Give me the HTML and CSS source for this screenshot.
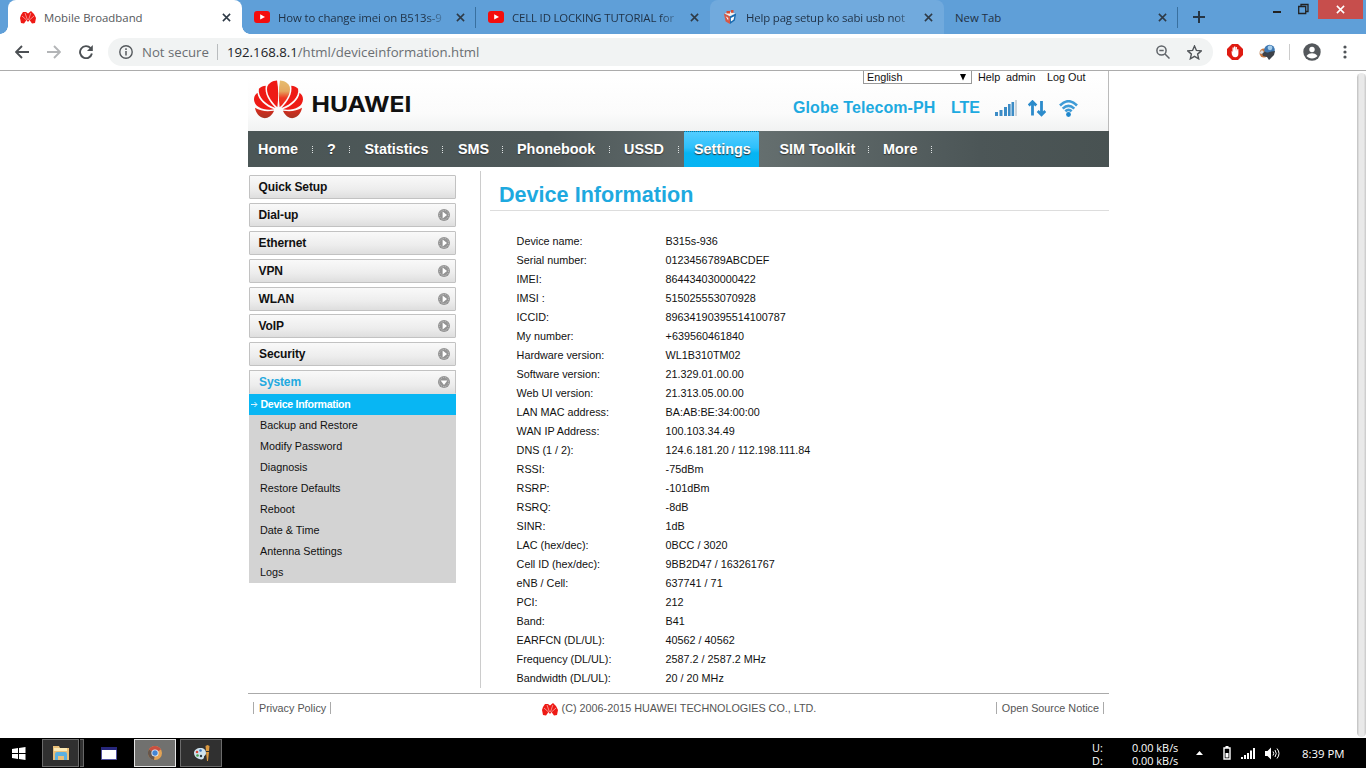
FILE: index.html
```html
<!DOCTYPE html>
<html lang="en">
<head>
<meta charset="utf-8">
<title>Mobile Broadband</title>
<link rel="stylesheet" href="styles.css">
</head>
<body>
<svg width="0" height="0" class="defs">
  <defs>
    <symbol id="x" viewBox="0 0 10 10"><path d="M1 1L9 9M9 1L1 9" stroke="currentColor" stroke-width="1.700" fill="none"/></symbol>
    <symbol id="yt" viewBox="0 0 16 12"><rect width="16" height="12" rx="3" fill="#f40d0d"/><path d="M6.200 3.200v5.400L11 5.900z" fill="#fff"/></symbol>
    <symbol id="flower" viewBox="0 0 50 39">
      <path d="M23.800 27.500C17 21 12 13 13.500 6.500C15 2.500 19 .3 23.500 0C25 8 25 18 23.800 27.500z"/>
      <path class="tip" d="M26.200 27.500C33 21 38 13 36.500 6.500C35 2.500 31 .3 26.500 0C25 8 25 18 26.200 27.500z"/>
      <path d="M22 28.200C12 24.500 3.500 17 5 8.500C7 6.500 9.500 5.600 12 5.500C10.500 14 15.500 21.500 22 28.200z"/>
      <path d="M28 28.200C38 24.500 46.500 17 45 8.500C43 6.500 40.500 5.600 38 5.500C39.500 14 34.500 21.500 28 28.200z"/>
      <path d="M20.500 29.500C10 31 .5 27.500 0 19.500C0 16.500 1 14.500 3.500 12.500C4.500 20 11.500 26 20.500 29.500z"/>
      <path d="M29.500 29.500C40 31 49.500 27.500 50 19.500C50 16.500 49 14.500 46.500 12.500C45.500 20 38.500 26 29.500 29.500z"/>
      <path class="low" d="M20.500 31C18.500 36 14 39 10 38.500C5 37.500 2 33.500 1 28C6.500 31.500 13 32 20.500 31z"/>
      <path class="low" d="M29.500 31C31.500 36 36 39 40 38.500C45 37.500 48 33.500 49 28C43.500 31.500 37 32 29.500 31z"/>
    </symbol>
    <symbol id="mini" viewBox="0 0 16 14">
      <path d="M3 2h3l2 1.500L11 1l3 3 2 4-1 5-3 .5L9.500 10 8 12l-1.500-2L4 13.500 1 13 0 8l1-3z"/>
      <path d="M5 3l2.500 7M10.800 3L8.500 10M2 6l4.500 4M14 6l-4.500 4" stroke="#fff" stroke-width=".5"/>
    </symbol>
    <symbol id="go" viewBox="0 0 12 12"><circle cx="6" cy="6" r="6" fill="#939393"/><circle cx="6" cy="6" r="4.600" fill="none" stroke="#c9c9c9" stroke-width="1" stroke-dasharray="1 1.200"/><path d="M4.600 2.600v6.800L9 6z" fill="#fff"/></symbol>
  </defs>
</svg>

<header class="tabs">
  <div class="tab active"><svg class="fav"><use href="#mini"/></svg><span class="tt">Mobile Broadband</span><svg class="close"><use href="#x"/></svg></div>
  <div class="tab sep"><svg class="fav yt"><use href="#yt"/></svg><span class="tt fade t2">How to change imei on B513s-9</span><svg class="close"><use href="#x"/></svg></div>
  <div class="tab"><svg class="fav yt"><use href="#yt"/></svg><span class="tt fade t3">CELL ID LOCKING TUTORIAL for</span><svg class="close"><use href="#x"/></svg></div>
  <div class="tab hover"><svg class="fav" viewBox="0 0 16 16"><path d="M1 4l7 3v9l-5-3z" fill="#d65846"/><path d="M8 7l7-3-1.500 8L8 16z" fill="#1769ae"/><path d="M2 4l6-2 6 2-6 3z" fill="#f3f0ed"/><path d="M4 1h4v3H4zM9 0h3v3H9z" fill="#db4d32"/><path d="M9 9l4-2-1 4-3 2zM3 7l3 2v3z" fill="#fff"/></svg><span class="tt fade t4">Help pag setup ko sabi usb not</span><svg class="close"><use href="#x"/></svg></div>
  <div class="tab last sep"><span class="tt">New Tab</span><svg class="close"><use href="#x"/></svg></div>
  <svg class="plus" viewBox="0 0 12 12"><path d="M6 0v12M0 6h12" stroke="#263544" stroke-width="2"/></svg>
  <div class="win">
    <svg width="8" height="20"><path d="M0 12h8" stroke="#222" stroke-width="2"/></svg>
    <svg width="11" height="20"><path d="M3 6V4.500h7v7H8M.7 6.500h7v7h-7z" fill="none" stroke="#222" stroke-width="1.300"/></svg>
    <div class="wclose"><svg width="9" height="9"><use href="#x"/></svg></div>
  </div>
</header>

<div class="toolbar">
  <svg class="back" viewBox="0 0 14 14"><path d="M14 7H1M7 1L1 7l6 6" fill="none" stroke="#4c5054" stroke-width="1.900"/></svg>
  <svg class="fwd" viewBox="0 0 14 14"><path d="M0 7h13M7 1l6 6-6 6" fill="none" stroke="#b3b5b7" stroke-width="1.900"/></svg>
  <svg class="reload" viewBox="0 0 14 14"><path d="M11.600 3.200A6 6 0 1 0 12.900 8.500" fill="none" stroke="#4c5054" stroke-width="1.900"/><path d="M13.800 0v6H8z" fill="#4c5054"/></svg>
  <div class="omni">
    <svg class="info" viewBox="0 0 14 14"><circle cx="7" cy="7" r="6.200" fill="none" stroke="#55595d" stroke-width="1.400"/><path d="M7 6v4.500M7 3.300v1.600" stroke="#55595d" stroke-width="1.500"/></svg>
    <span class="ns">Not secure</span><i></i>
    <span class="url"><b>192.168.8.1</b>/html/deviceinformation.html</span>
    <svg class="mag" viewBox="0 0 14 14"><circle cx="5.500" cy="5.500" r="4.600" fill="none" stroke="#5f6368" stroke-width="1.500"/><path d="M9 9l4.500 4.500M3.300 5.500h4.400" stroke="#5f6368" stroke-width="1.500"/></svg>
    <svg class="star" viewBox="0 0 14 14"><path d="M7 .9l1.800 4.200 4.500.4-3.400 3 1 4.400L7 10.600l-3.900 2.300 1-4.400-3.400-3 4.500-.4z" fill="none" stroke="#505458" stroke-width="1.300"/></svg>
  </div>
  <svg class="e1" viewBox="0 0 16 16"><path d="M5 0h6l5 5v6l-5 5H5l-5-5V5z" fill="#df1b12"/><path d="M4.500 7l1 .8V3.600h1.200V7l.3-4.500h1.300V7l.4-4h1.200v4.200l.5-2.200 1 .2v4.300c0 2.500-1 3.700-3.200 3.700-2 0-2.700-1.200-3.400-3z" fill="#fff"/></svg>
  <svg class="e2" viewBox="0 0 16 16"><circle cx="5" cy="9" r="4.500" fill="#c9783f"/><circle cx="10.500" cy="6" r="5.300" fill="#3f79b3"/><circle cx="11" cy="3.800" r="2.400" fill="#a6cdea"/><path d="M3 9c3-3 5 1 7-1l6-1-1 4-5 5-2-3-4-1z" fill="#3d4249"/><path d="M0 9l3-3 2 2-2 2z" fill="#d9dde0"/></svg>
  <i class="tdiv"></i>
  <svg class="user" viewBox="0 0 18 18"><circle cx="9" cy="9" r="8.700" fill="#54585c"/><circle cx="9" cy="6.500" r="2.700" fill="#fff"/><path d="M3.500 13c1.500-2.200 3.500-2.800 5.500-2.800s4 .6 5.500 2.800c-1.400 1.700-3.300 2.400-5.500 2.400S4.900 14.700 3.500 13z" fill="#fff"/></svg>
  <svg class="dots" viewBox="0 0 4 14"><g fill="#505458"><circle cx="2" cy="2" r="1.600"/><circle cx="2" cy="7" r="1.600"/><circle cx="2" cy="12" r="1.600"/></g></svg>
</div>

<main class="view">
  <div class="page">
    <div class="head">
      <svg class="logo" viewBox="0 0 160 42"><defs><linearGradient id="pg" x1="0" y1="0" x2="0" y2="1"><stop offset="0" stop-color="#e6bd70"/><stop offset=".4" stop-color="#e5a860"/><stop offset=".65" stop-color="#ee3a22"/><stop offset="1" stop-color="#f02018"/></linearGradient><linearGradient id="lg" x1="0" y1="0" x2="0" y2="1"><stop offset="0" stop-color="#e02a1c"/><stop offset="1" stop-color="#a83524"/></linearGradient></defs><use href="#flower" width="49" height="39" x="0" y="0"/><text x="57.500" y="31.500" textLength="100" lengthAdjust="spacingAndGlyphs">HUAWEI</text></svg>
      <div class="hr">
        <div class="top"><div class="sel"><span>English</span><svg width="6" height="7"><path d="M0 0h6L3 6.500z"/></svg></div><span class="help">Help</span><span class="adm">admin</span><span class="out">Log Out</span></div>
        <div class="net"><span class="op">Globe Telecom-PH</span><span class="lte">LTE</span>
          <svg class="sig" viewBox="0 0 22 17"><g fill="#3c8cc6"><rect y="12" width="3" height="4"/><rect x="4.500" y="10" width="3" height="6"/><rect x="9" y="7" width="3" height="9"/><rect x="13" y="4" width="2.600" height="12"/><rect x="16.500" y="2" width="2.600" height="14"/></g><rect x="20" y="0" width="2" height="16" fill="#ccd5dc"/></svg>
          <svg class="ud" viewBox="0 0 18 17"><g fill="none" stroke="#2c8bcb" stroke-width="2.800"><path d="M4.500 15.500V2M.7 5.500L4.500 1.700 8.300 5.500"/><path d="M13.500 1v13.500M9.700 11l3.800 3.800L17.300 11"/></g></svg>
          <svg class="wifi" viewBox="0 0 19 17"><g fill="none" stroke="#3f9bd6" stroke-width="2.600"><path d="M1 5.500Q9.500-3 18 5.500"/><path d="M3.700 8.600q5.800-5.500 11.600 0"/><path d="M6.300 11.300q3.200-2.800 6.400 0"/></g><circle cx="9.500" cy="14.500" r="2.400" fill="#1d86cc"/></svg>
        </div>
      </div>
    </div>
    <nav class="nav">
      <a class="n1">Home</a><a class="n2">?</a><a class="n3">Statistics</a><a class="n4">SMS</a><a class="n5">Phonebook</a><a class="n6">USSD</a><a class="on">Settings</a><a class="n8">SIM Toolkit</a><a class="n9">More</a>
    </nav>
    <div class="body">
      <aside class="side">
        <div class="mi">Quick Setup</div>
        <div class="mi">Dial-up<svg><use href="#go"/></svg></div>
        <div class="mi">Ethernet<svg><use href="#go"/></svg></div>
        <div class="mi">VPN<svg><use href="#go"/></svg></div>
        <div class="mi short">WLAN<svg><use href="#go"/></svg></div>
        <div class="mi">VoIP<svg><use href="#go"/></svg></div>
        <div class="mi ind">Security<svg><use href="#go"/></svg></div>
        <div class="mi ind open">System<svg class="dn"><use href="#go"/></svg></div>
        <ul class="sub">
          <li class="cur"><svg width="7" height="7" viewBox="0 0 7 7"><path d="M0 3.500h6M3.500 1L6 3.500 3.500 6" fill="none" stroke="#d9f3ff"/></svg>Device Information</li>
          <li>Backup and Restore</li><li>Modify Password</li><li>Diagnosis</li><li>Restore Defaults</li><li>Reboot</li><li>Date &amp; Time</li><li>Antenna Settings</li><li>Logs</li>
        </ul>
      </aside>
      <section class="main">
        <h1><span>Device Information</span></h1>
        <dl>
          <dt>Device name:</dt><dd>B315s-936</dd>
          <dt>Serial number:</dt><dd>0123456789ABCDEF</dd>
          <dt>IMEI:</dt><dd>864434030000422</dd>
          <dt>IMSI :</dt><dd>515025553070928</dd>
          <dt>ICCID:</dt><dd>89634190395514100787</dd>
          <dt>My number:</dt><dd>+639560461840</dd>
          <dt>Hardware version:</dt><dd>WL1B310TM02</dd>
          <dt>Software version:</dt><dd>21.329.01.00.00</dd>
          <dt>Web UI version:</dt><dd>21.313.05.00.00</dd>
          <dt>LAN MAC address:</dt><dd>BA:AB:BE:34:00:00</dd>
          <dt>WAN IP Address:</dt><dd>100.103.34.49</dd>
          <dt>DNS (1 / 2):</dt><dd>124.6.181.20 / 112.198.111.84</dd>
          <dt>RSSI:</dt><dd>-75dBm</dd>
          <dt>RSRP:</dt><dd>-101dBm</dd>
          <dt>RSRQ:</dt><dd>-8dB</dd>
          <dt>SINR:</dt><dd>1dB</dd>
          <dt>LAC (hex/dec):</dt><dd>0BCC / 3020</dd>
          <dt>Cell ID (hex/dec):</dt><dd>9BB2D47 / 163261767</dd>
          <dt>eNB / Cell:</dt><dd>637741 / 71</dd>
          <dt>PCI:</dt><dd>212</dd>
          <dt>Band:</dt><dd>B41</dd>
          <dt>EARFCN (DL/UL):</dt><dd>40562 / 40562</dd>
          <dt>Frequency (DL/UL):</dt><dd>2587.2 / 2587.2 MHz</dd>
          <dt>Bandwidth (DL/UL):</dt><dd>20 / 20 MHz</dd>
        </dl>
      </section>
    </div>
    <footer class="foot"><span class="lk">Privacy Policy</span><span class="copy"><svg><use href="#mini"/></svg>(C) 2006-2015 HUAWEI TECHNOLOGIES CO., LTD.</span><span class="lk">Open Source Notice</span></footer>
  </div>
  <div class="scroll"></div>
</main>

<div class="task">
  <svg class="start" viewBox="0 0 14 13"><g fill="#fff"><path d="M0 2l6-1v5H0zM7 .9L13.500 0v6H7zM0 7h6v5l-6-.9zM7 7h6.500v6L7 12z"/></g></svg>
  <div class="tb b1"><svg width="18" height="16" viewBox="0 0 18 16"><path d="M1 1h6l1 2h9v12H1z" fill="#e9bf78"/><path d="M2 3h13v3H2z" fill="#fbe9b4"/><path d="M3 15V9q0-2 2-2h8q2 0 2 2v6h-3v-4H6v4z" fill="#5bb0e0"/></svg></div><i class="stack"></i>
  <div class="b2"><svg width="16" height="13"><path d="M.5.500h15v12H.5z" fill="#fff" stroke="#5353a0"/><path d="M0 0h16v3H0z" fill="#27277c"/></svg></div>
  <div class="tb b3"><svg width="14" height="14" viewBox="0 0 14 14"><circle cx="7" cy="7" r="7" fill="#e2a355"/><path d="M7 7L.9 3.500A7 7 0 0 1 13 3.500z" fill="#c94f40"/><path d="M7 7l-1 7A7 7 0 0 1 .9 3.500z" fill="#66564c"/><circle cx="7" cy="7" r="3.600" fill="#e9eef5"/><circle cx="7" cy="7" r="2.700" fill="#4385d4"/></svg></div>
  <div class="tb b4"><svg width="17" height="16" viewBox="0 0 17 16"><path d="M1 8c0-3 3-5 6.500-5S13 5 13 8s-2 2-2 4-2 3-5 2-5-3-5-6z" fill="#cfe3ee"/><circle cx="4" cy="7" r="1.300" fill="#d84b3a"/><circle cx="7.500" cy="5.500" r="1.300" fill="#3975bf"/><circle cx="4.500" cy="10.500" r="1.300" fill="#46a04c"/><circle cx="8" cy="11" r="1.200" fill="#2d3a44"/><path d="M13 7h3l-1 9h-1zM12.500 1l2-1 2 1-.5 5h-3z" fill="#d9973e"/></svg></div>
  <div class="tray">
    <div class="ud2"><span>U:</span><span>0.00 kB/s</span><span>D:</span><span>0.00 kB/s</span></div>
    <svg class="up" viewBox="0 0 7 4"><path d="M0 4L3.500 0 7 4z" fill="#fff"/></svg>
    <svg class="bat" viewBox="0 0 8 14"><path d="M1 2h6v11H1zM2.500.800h3" fill="none" stroke="#fff" stroke-width="1.400"/><path d="M2.500 7h3v4.500h-3z" fill="#fff"/></svg>
    <svg class="sg" viewBox="0 0 14 11"><path d="M0 9h2v2H0zM3 7h2v4H3zM6 5h2v6H6zM9 2.500h2V11H9zM12 0h2v11h-2z" fill="#fff"/></svg>
    <svg class="spk" viewBox="0 0 15 13"><path d="M0 4h2.500L6 .5v12L2.500 9H0z" fill="#fff"/><path d="M8 4.500q1.500 2 0 4M10 3q2.500 3.500 0 7M12 1.500q4 5 0 10" stroke="#fff" fill="none"/></svg>
    <span class="clock">8:39 PM</span>
  </div>
</div>
</body>
</html>
```
FILE: styles.css
```css
* { box-sizing: border-box; }
body { margin: 0; width: 1366px; height: 768px; overflow: hidden; display: flex; flex-direction: column; background: #fff; font-family: "Liberation Sans", Arial, sans-serif; font-size: 10.8px; color: #111; }
svg { flex: none; display: block; }
.defs { position: absolute; }
#flower, #mini { fill: #ee1a15; }
.tabs, .toolbar, .task { font-family: "Open Sans", sans-serif; }

.tabs { height: 34px; background: #5f9fd8; display: flex; padding-left: 8px; }
.tab { width: 234px; height: 34px; display: flex; align-items: center; padding: 0 11px 0 12px; color: #1f3145; position: relative; }
.tab.active { background: #fff; color: #55585b; border-radius: 8px 8px 0 0; }
.tab.active::before, .tab.active::after { content: ""; position: absolute; bottom: 0; width: 8px; height: 8px; }
.tab.active::before { left: -8px; background: radial-gradient(circle at 0 0, transparent 7.5px, #fff 8px); }
.tab.active::after { right: -8px; background: radial-gradient(circle at 100% 0, transparent 7.5px, #fff 8px); }
.tab.hover { background: #71aadd; border-radius: 8px 8px 0 0; }
.tab.sep { padding-right: 10px; border-right: 1px solid; border-image: linear-gradient(transparent 8px, #39709f 8px, #39709f 27px, transparent 27px) 1; }
.fav { width: 16px; height: 14px; margin-right: 8px; }
.fav.yt { height: 12px; }
.tab.last { padding-left: 11px; }
.tt { flex: 1; font-size: 11.4px; white-space: nowrap; margin-right: 6px; }
.fade { -webkit-mask-image: linear-gradient(90deg, #000 86%, transparent 100%); mask-image: linear-gradient(90deg, #000 86%, transparent 100%); }
.t2 { letter-spacing: -.12px; }
.t3 { letter-spacing: -.15px; }
.t4 { letter-spacing: -.15px; }
.close { width: 9px; height: 9px; color: #2e3a46; }
.plus { width: 12px; height: 12px; margin: 11px 0 0 15px; }
.win { margin-left: auto; display: flex; height: 20px; padding-right: 3px; }
.win > svg { margin-right: 17px; }
.win > svg + svg { margin-right: 9px; }
.wclose { width: 45px; height: 19px; background: #c74e4c; color: #fff; display: flex; align-items: center; justify-content: center; }

.toolbar { height: 37px; border-bottom: 1px solid #acacac; display: flex; align-items: center; padding-left: 15px; }
.back, .fwd, .reload { width: 14px; height: 14px; }
.fwd, .reload { margin-left: 18px; }
.omni { width: 1105px; height: 28px; margin-left: 15px; border-radius: 14px; background: #f1f3f3; display: flex; align-items: center; padding: 0 11px; font-size: 13.2px; color: #6a6e72; }
.info { width: 14px; height: 14px; margin-right: 9px; }
.omni i { width: 1px; height: 16px; background: #b9bcbe; margin: 0 9px 0 8px; }
.ns { width: 67px; white-space: nowrap; }
.url b { font-weight: 400; color: #202226; }
.mag { width: 14px; height: 14px; margin-left: auto; margin-right: 17px; }
.star { width: 15px; height: 15px; }
.e1, .e2 { width: 16px; height: 16px; }
.e1 { margin-left: 14px; }
.e2 { margin-left: 16px; }
.tdiv { width: 1px; height: 16px; background: #ccc; margin-left: 14px; }
.user { width: 18px; height: 18px; margin-left: 13px; }
.dots { width: 4px; height: 14px; margin-left: 22px; }

.view { height: 667px; display: flex; justify-content: flex-end; }
.page { width: 861px; margin-right: 248px; display: flex; flex-direction: column; }
.scroll { width: 9px; margin-top: 2px; height: 664px; border-radius: 5px; background: linear-gradient(90deg, #bdbdbd, #e9e9e9 25%, #e9e9e9 75%, #c6c6c6); }
.head { height: 60px; flex: none; border-right: 1px solid #bbb; background: linear-gradient(#fff 10%, #fbfbfb 70%, #f1f2f2); display: flex; justify-content: space-between; }
.logo { width: 160px; height: 42px; margin: 9px 0 0 6px; --tip: url(#pg); --low: url(#lg); }
.logo text { font: 700 21.5px Inter, sans-serif; fill: #111; }
.tip { fill: var(--tip, #ee1a15); }
.low { fill: var(--low, #ee1a15); }
.hr { width: 245px; }
.top { display: flex; height: 13px; line-height: 13px; }
.sel { width: 109px; height: 13px; border: 1px solid #999; border-top: 0; background: #fff; display: flex; align-items: center; justify-content: space-between; padding: 0 5px 0 3px; }
.help { width: 28px; margin-left: 6px; }
.adm { width: 41px; }
.net { display: flex; align-items: center; height: 20px; margin: 14px 0 0 -70px; font-weight: 700; font-size: 16px; color: #1eaae0; white-space: nowrap; }
.op { width: 158px; line-height: 22px; letter-spacing: .08px; }
.lte { width: 44px; }
.sig { width: 22px; height: 17px; }
.ud { width: 18px; height: 17px; margin-left: 11px; }
.wifi { width: 19px; height: 17px; margin-left: 13px; }
.nav { height: 36px; flex: none; background: linear-gradient(90deg, #4b5656, #4e5859 35%, #667070 58%, #4c5657 85%, #485252); display: flex; line-height: 36px; color: #fff; font-size: 14.4px; font-weight: 700; text-shadow: 0 1px 1px #333; }
.nav a { padding-left: 14px; position: relative; white-space: nowrap; }
.nav a:not(.on)::after { content: ""; position: absolute; right: 0; top: 15px; height: 7px; border-right: 1px dotted #dfe3e3; }
.nav .n1 { width: 65px; padding-left: 10px; }
.nav .n2 { width: 37px; }
.nav .n3 { width: 93px; padding-left: 14.5px; }
.nav .n4 { width: 60px; padding-left: 15px; }
.nav .n5 { width: 107px; }
.nav .n6 { width: 69px; }
.nav .on { width: 75px; margin-left: 5px; padding-left: 10px; background: linear-gradient(#54cdff, #2dc0fb 45%, #06b5f3 60%, #08b4f2); border-top: 1px dotted #206a90; line-height: 35px; }
.nav .n8 { width: 110px; padding-left: 20.5px; }
.nav .n9 { width: 63px; }
.body { height: 526px; flex: none; display: flex; }
.side { width: 233px; height: 517px; margin-top: 4px; padding: 4px 24px 0 1px; border-right: 1px solid #ccc; }
.mi { height: 24px; margin-bottom: 4px; border: 1px solid #c2c2c2; border-radius: 1px; background: linear-gradient(#f9f9f9, #ededed 60%, #dedede); display: flex; align-items: center; justify-content: space-between; padding: 0 5px 0 8.5px; font-weight: 700; font-size: 12px; letter-spacing: -.12px; }
.mi svg { width: 12px; height: 12px; }
.mi.short { margin-bottom: 3px; }
.mi.ind { padding-left: 9px; }
.mi.open { color: #22a9df; margin-bottom: 0; border-bottom: 0; padding-bottom: 1px; }
.dn { transform: rotate(90deg); }
.sub { margin: 0; padding: 0; list-style: none; background: #d3d3d3; }
.sub li { height: 21px; line-height: 21px; padding-left: 11px; white-space: nowrap; }
.sub .cur { background: #08b6f3; color: #fff; font-weight: 700; display: flex; align-items: center; gap: 2.5px; padding-left: 2px; font-size: 10.6px; letter-spacing: -.3px; }
.main { flex: 1; padding-left: 9px; }
h1 { margin: 0; height: 44px; border-bottom: 1px solid #ddd; color: #1ea9df; font-size: 21.6px; line-height: 55px; padding-left: 9px; }
dl { margin: 21px 0 0 26.6px; display: grid; grid-template-columns: 149px 1fr; grid-auto-rows: 19px; line-height: 19px; }
dd { margin: 0; }
.foot { height: 31px; border-top: 1px solid #aaa; display: flex; justify-content: space-between; align-items: center; padding: 0 5px 2px; color: #555; }
.lk { border: 1px solid #aaa; border-width: 0 1px; padding: 0 4px 0 5px; line-height: 12px; }
.copy { display: flex; align-items: center; gap: 4px; margin-left: 31px; }
.copy svg { width: 16px; height: 14px; margin-top: 2px; }

.task { height: 30px; background: #000; color: #fff; display: flex; align-items: center; padding-left: 12px; }
.start { width: 14px; height: 13px; }
.tb { width: 42px; height: 28px; border: 1px solid #6b6b6b; background: #303030; display: flex; align-items: center; justify-content: center; }
.b1 { width: 37px; margin-left: 16px; }
.stack { width: 4px; height: 28px; background: #303030; border: 1px solid #666; border-left: 0; margin-left: 1px; }
.b2 { margin-left: 17px; }
.b3 { margin-left: 17px; background: #71716f; border-color: #e4e4e4; }
.b4 { margin-left: 4px; }
.tray { margin-left: auto; display: flex; align-items: center; }
.ud2 { display: grid; grid-template-columns: 40px 56px; line-height: 13px; font-size: 10.9px; white-space: nowrap; margin-top: 2px; }
.up { width: 7px; height: 4px; margin-left: 8px; }
.bat { width: 8px; height: 14px; margin-left: 20px; }
.sg { width: 14px; height: 11px; margin-left: 10px; }
.spk { width: 15px; height: 13px; margin-left: 10px; }
.clock { width: 64px; margin-left: 22px; font-size: 11.4px; white-space: nowrap; }
```
